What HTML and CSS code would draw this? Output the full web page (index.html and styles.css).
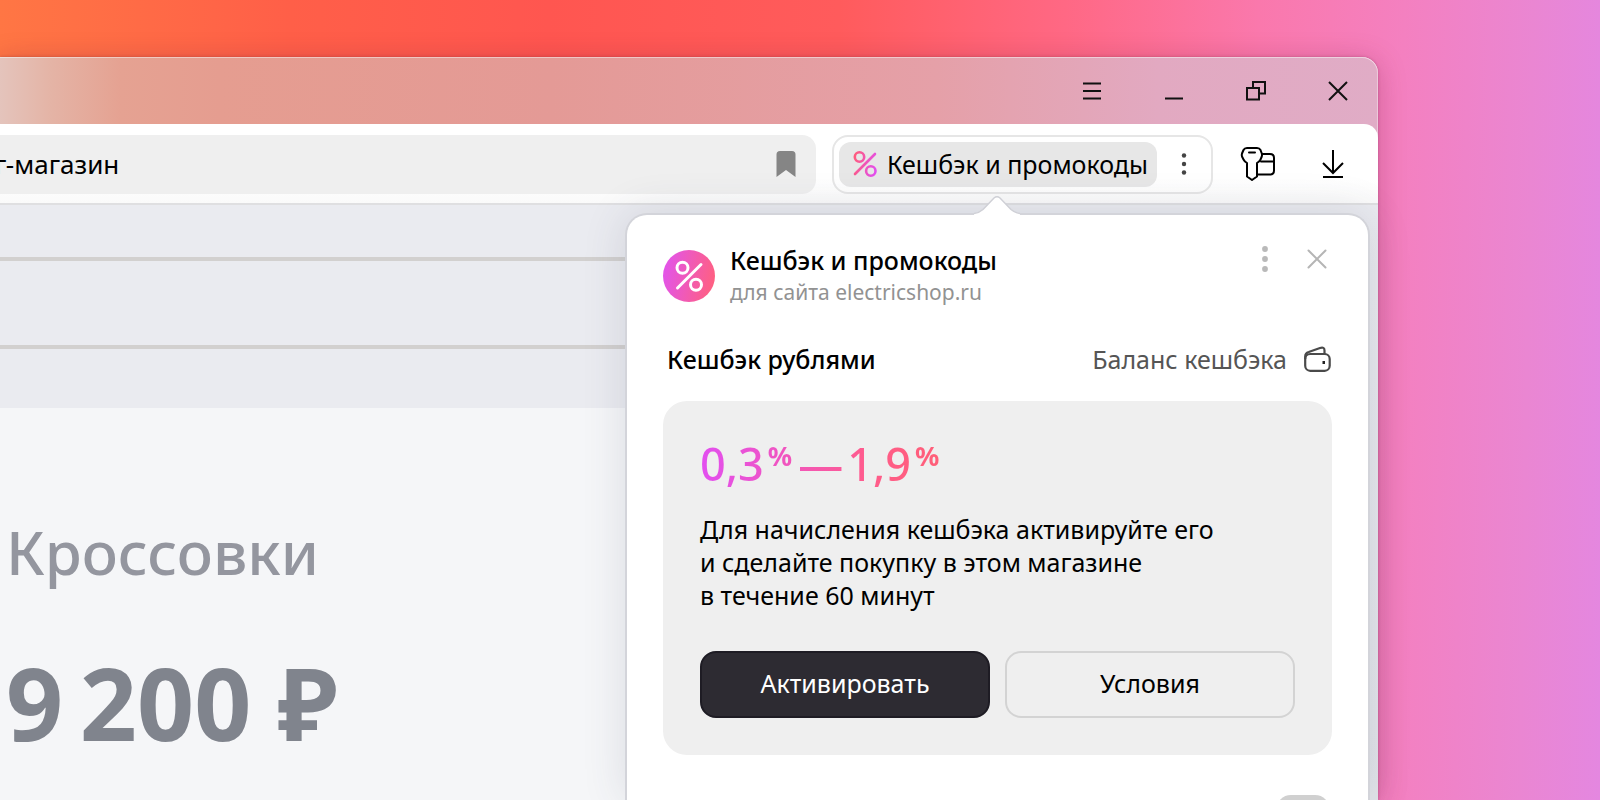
FILE: index.html
```html
<!DOCTYPE html>
<html lang="ru">
<head>
<meta charset="utf-8">
<title>Кешбэк и промокоды</title>
<link rel="stylesheet" href="styles.css">
</head>
<body>
<div class="window">
  <header class="titlebar">
    <button class="win-btn" aria-label="Меню"><svg width="20" height="20" viewBox="0 0 20 20"><path d="M1 2.500H19M1 10H19M1 17.500H19"/></svg></button>
    <button class="win-btn" aria-label="Свернуть"><svg width="20" height="20" viewBox="0 0 20 20"><path d="M1 17.500H19"/></svg></button>
    <button class="win-btn" aria-label="Восстановить"><svg width="20" height="20" viewBox="0 0 20 20"><path d="M1 7H13V18.500H1ZM7 7V1H19V12.500H13"/></svg></button>
    <button class="win-btn" aria-label="Закрыть"><svg width="20" height="20" viewBox="0 0 20 20"><path d="M1 1L19 19M19 1L1 19"/></svg></button>
  </header>
  <div class="toolbar">
    <div class="address">
      <span class="address-text">г-магазин</span>
      <button class="icon-btn" aria-label="Закладка"><svg width="20" height="26" viewBox="0 0 20 26"><path fill="#858585" d="M4 0H16Q19.500 0 19.500 3.500V26L10 19L.5 26V3.500Q.5 0 4 0Z"/></svg></button>
    </div>
    <div class="ext">
      <button class="ext-main">
        <svg width="24" height="26" viewBox="0 0 24 26" fill="none" stroke="url(#g1)" stroke-width="2.600" stroke-linecap="round">
          <defs><linearGradient id="g1" gradientUnits="userSpaceOnUse" x1="0" y1="10" x2="24" y2="16"><stop offset="0" stop-color="#ff5c7c"/><stop offset="1" stop-color="#e24ff0"/></linearGradient></defs>
          <circle cx="6.500" cy="6" r="4.700"/><circle cx="17.800" cy="20" r="4.700"/><path d="M2 23L22 3"/>
        </svg>
        <span>Кешбэк и промокоды</span>
      </button>
      <button class="ext-more" aria-label="Ещё"><svg width="6" height="24" viewBox="0 0 6 24" fill="#444"><circle cx="3" cy="3.500" r="2.200"/><circle cx="3" cy="12" r="2.200"/><circle cx="3" cy="20.500" r="2.200"/></svg></button>
    </div>
    <button class="tool" aria-label="Пароли и карты">
      <svg width="36" height="36" viewBox="0 0 36 36" fill="none" stroke="#000" stroke-width="2" stroke-linejoin="round" stroke-linecap="round">
        <path d="M7 2H17Q19.500 2 20.500 4L21.800 7.500Q22.300 9 21.800 10.500L20.500 13.500Q19.500 15.500 17 17V30.500L12 34L7 30.500V17Q4.500 15.500 3.500 13.500L2 10.500Q1.500 9 2 7.500L3.500 4Q4.500 2 7 2Z"/>
        <path d="M9 6.500H15M22 8H30Q34 8 34 12V24.500Q34 28.500 30 28.500H17.500M21 15.500H34"/>
      </svg>
    </button>
    <button class="tool" aria-label="Загрузки">
      <svg width="22" height="28" viewBox="0 0 22 28" fill="none" stroke="#000" stroke-width="2"><path d="M11 0V23M1 13L11 23L21 13M1 27H21"/></svg>
    </button>
  </div>
  <main class="page">
    <div class="page-body">
      <div class="page-head"><div class="rule"></div><div class="rule"></div></div>
      <div class="product">
        <h1 class="product-name">Кроссовки</h1>
        <p class="product-price">9&#8201;200 ₽</p>
      </div>
    </div>
  </main>

  <section class="popup" aria-label="Кешбэк и промокоды">
    <svg class="popup-arrow" width="46" height="20" viewBox="0 0 46 20"><path d="M0 18.500Q5 18 9 14.500L20 3Q23 .5 26 3L37 14.500Q41 18 46 18.500V20H0Z" fill="#fff"/><path d="M0 18.500Q5 18 9 14.500L20 3Q23 .5 26 3L37 14.500Q41 18 46 18.500" fill="none" stroke="#cfd0d6" stroke-width="1.500"/></svg>
    <div class="popup-head">
      <svg width="52" height="52" viewBox="0 0 52 52" fill="none" stroke="#fff" stroke-width="3" stroke-linecap="round">
        <defs><linearGradient id="g2" x1="0" y1=".4" x2="1" y2=".6"><stop offset="0" stop-color="#e254ea"/><stop offset="1" stop-color="#ff6080"/></linearGradient></defs>
        <circle cx="26" cy="26" r="26" fill="url(#g2)" stroke="none"/>
        <circle cx="19.500" cy="17.700" r="5.500"/><circle cx="33" cy="34.700" r="5.500"/><path d="M14.500 38L38 14.500"/>
      </svg>
      <div class="popup-titles">
        <h2 class="title">Кешбэк и промокоды</h2>
        <p class="subtitle">для сайта electricshop.ru</p>
      </div>
      <div class="popup-actions">
        <button class="icon-btn" aria-label="Ещё"><svg width="6" height="26" viewBox="0 0 6 26" fill="#b9b9b9"><circle cx="3" cy="3" r="2.900"/><circle cx="3" cy="13" r="2.900"/><circle cx="3" cy="23" r="2.900"/></svg></button>
        <button class="icon-btn" aria-label="Закрыть"><svg width="20" height="20" viewBox="0 0 20 20" stroke="#b5b5b5" stroke-width="2" stroke-linecap="round"><path d="M1.500 1.500L18.500 18.500M18.500 1.500L1.500 18.500"/></svg></button>
      </div>
    </div>
    <div class="section-head">
      <h3 class="title">Кешбэк рублями</h3>
      <a class="balance" href="#balance">Баланс кешбэка
        <svg width="27" height="26" viewBox="0 0 27 26" fill="none" stroke="#4a4a4a" stroke-width="2.200" stroke-linejoin="round"><rect x="1.200" y="8" width="24.500" height="16.800" rx="5"/><path d="M1.200 13V10.500Q1.200 7 4.700 6L16 2Q20.500 .5 20.500 4.500V8"/><rect x="18.500" y="15" width="2.500" height="3" fill="#222" stroke="none"/></svg>
      </a>
    </div>
    <div class="card">
      <p class="rate">0,3<sup>%</sup><span class="dash">—</span>1,9<sup>%</sup></p>
      <p class="text">Для начисления кешбэка активируйте его<br>и сделайте покупку в этом магазине<br>в течение 60 минут</p>
      <div class="buttons">
        <button class="btn btn-dark">Активировать</button>
        <button class="btn">Условия</button>
      </div>
    </div>
    <div class="switch-row"><input class="switch" type="checkbox" aria-label="Показывать предложения"></div>
  </section>
</div>
</body>
</html>
```
FILE: styles.css
```css
* { box-sizing: border-box; }
body {
  margin: 0;
  height: 100vh;
  overflow: hidden;
  padding: 57px 222px 0 0;
  font-family: "Noto Sans", "Open Sans", sans-serif;
  font-size: 25px;
  color: #000;
  background: linear-gradient(91deg, #ff7644 0%, #ff5f48 18%, #ff5650 34%, #ff5b5c 52%, #ff6884 66%, #fa78ac 78%, #f480c0 87%, #ea86d2 95%, #e487e0 100%);
}
h1, h2, h3, p { margin: 0; font-weight: 400; }
button { font: inherit; color: inherit; border: 0; padding: 0; background: none; }
svg { display: block; flex: none; }

.window {
  position: relative;
  height: 100%;
  border-radius: 0 16px 0 0;
  background: linear-gradient(90deg, #e4c4bc 0, #e4b4a6 50px, #e5a292 120px, #e59d90 220px, #e49a96 40%, #e5a0a8 68%, #e2a9c1 84%, #e0acc6 100%);
  box-shadow: 0 4px 28px rgba(110, 20, 60, .28), 0 0 3px rgba(80, 20, 40, .3), inset 0 1px 0 rgba(255, 255, 255, .45), inset -1px 0 0 rgba(255, 255, 255, .35);
}
.titlebar { display: flex; justify-content: flex-end; gap: 42px; height: 67px; padding: 0 20px 0 0; }
.win-btn { display: grid; place-items: center; width: 40px; height: 67px; }
.win-btn svg { fill: none; stroke: #111; stroke-width: 2px; }

.toolbar {
  display: flex;
  align-items: center;
  height: 81px;
  padding: 1px 34px 0 0;
  background: linear-gradient(#fff 70%, #fafafa);
  border-radius: 0 14px 0 0;
  border-bottom: 2px solid #dfdfe1;
}
.address {
  flex: 1;
  display: flex;
  align-items: center;
  justify-content: space-between;
  height: 59px;
  padding-right: 20px;
  margin-right: 16px;
  background: #efefef;
  border-radius: 0 14px 14px 0;
}
.address-text { margin-left: -5px; font-size: 26px; }
.ext { display: flex; align-items: center; height: 59px; padding: 0 0 0 5px; border: 2px solid #e6e6e6; border-radius: 16px; }
.ext-main { display: flex; align-items: center; gap: 10px; height: 45px; padding: 0 9px 0 14px; border-radius: 12px; background: #e7e7e7; }
.ext-more { display: grid; place-items: center; width: 54px; height: 45px; }
.tool { margin-left: 27px; }
.tool + .tool { margin-left: 46px; }

.page { height: calc(100% - 148px); padding-right: 20px; background: linear-gradient(#eaebf0, #e2e4e9); }
.page-body { height: 100%; background: #f5f6f8; }
.page-head { display: grid; align-content: start; gap: 84px; height: 203px; padding-top: 52px; background: #eaebf0; }
.rule { height: 4px; background: #d2d0cf; }
.product { padding: 102px 0 0 6px; }
.product-name { font-size: 60px; line-height: 84px; font-weight: 500; color: #94969f; }
.product-price { margin-top: 38px; font-size: 100px; line-height: 140px; font-weight: 700; color: #80848d; white-space: nowrap; }

.popup {
  position: absolute;
  top: 156px;
  right: 8px;
  bottom: 0;
  width: 745px;
  padding: 29px 36px 0;
  background: #fff;
  border: 2px solid #d3d4da;
  border-bottom: 0;
  border-radius: 22px 22px 0 0;
  box-shadow: 0 0 44px rgba(60, 65, 90, .14);
}
.popup-arrow { position: absolute; left: 347px; top: -20px; }
.popup-head { display: flex; align-items: center; gap: 15px; }
.popup-titles { flex: 1; }
.title { font-size: 25px; line-height: 32px; font-weight: 500; }
.subtitle { font-size: 21px; line-height: 32px; color: #929292; }
.popup-actions { display: flex; align-items: center; align-self: flex-start; gap: 39px; height: 26px; margin-top: 2px; padding-right: 5px; }
.section-head { display: flex; align-items: center; justify-content: space-between; height: 36px; margin: 33px 1px 0 4px; }
.balance { display: flex; align-items: center; gap: 17px; color: #555; text-decoration: none; }
.card { margin-top: 24px; padding: 35px 37px 37px; background: #efefef; border-radius: 24px; }
.rate {
  width: max-content;
  display: flex;
  font-size: 45px;
  line-height: 56px;
  font-weight: 500;
  color: transparent;
  background: linear-gradient(90deg, #e24ff0, #f055c0 35%, #ff5c8c 70%, #ff5f78);
  background-clip: text;
  -webkit-background-clip: text;
}
.rate sup { margin-left: 4px; font-size: 27px; line-height: 39px; font-weight: 700; }
.dash { margin: 0 4px 0 6px; }
.text { margin-top: 21px; line-height: 33px; }
.buttons { display: grid; grid-template-columns: 1fr 1fr; gap: 15px; margin-top: 39px; }
.btn { height: 67px; padding-bottom: 3px; border: 2px solid #d3d3d3; border-radius: 16px; }
.btn-dark { color: #fff; background: #2d2b32; border-color: #1e1c24; }
.switch-row { display: flex; justify-content: flex-end; margin-top: 40px; padding-right: 2px; }
.switch { appearance: none; margin: 0; width: 54px; height: 30px; border-radius: 15px; background: #d0d0d0; }
```
